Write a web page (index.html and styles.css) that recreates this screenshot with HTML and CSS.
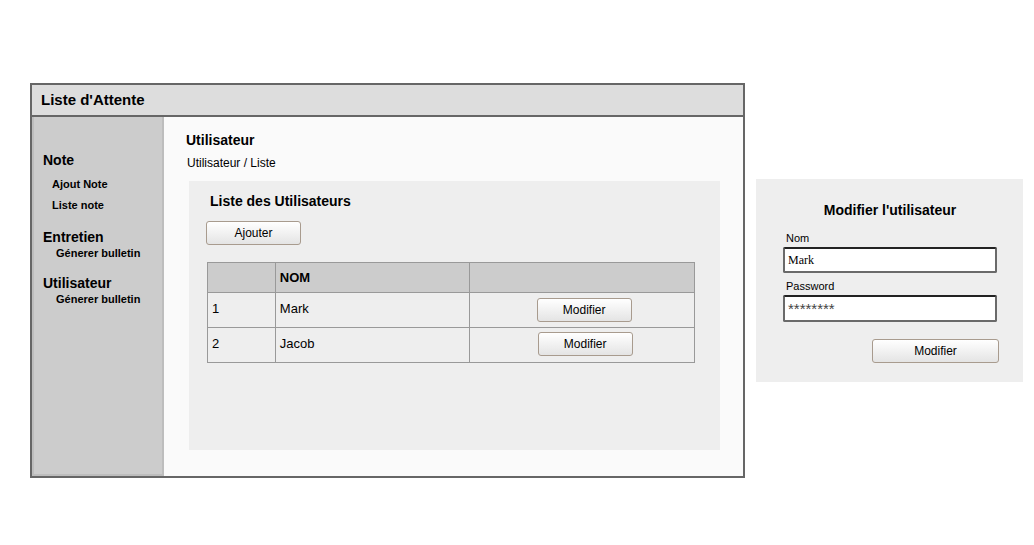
FILE: index.html
```html
<!DOCTYPE html>
<html lang="fr">
<head>
<meta charset="utf-8">
<title>Liste d'Attente</title>
<link rel="stylesheet" href="styles.css">
</head>
<body>
<div class="page">
  <div class="window">
    <div class="titlebar">Liste d'Attente</div>
    <div class="win-body">
      <nav class="sidebar">
        <div class="nav-group">Note</div>
        <div class="nav-item">Ajout Note</div>
        <div class="nav-item nav-item-2">Liste note</div>
        <div class="nav-group nav-group-gap">Entretien</div>
        <div class="nav-sub">Génerer bulletin</div>
        <div class="nav-group nav-group-gap2">Utilisateur</div>
        <div class="nav-sub">Génerer bulletin</div>
      </nav>
      <main class="main">
        <div class="page-title">Utilisateur</div>
        <div class="breadcrumb">Utilisateur / Liste</div>
        <section class="panel">
          <div class="panel-title">Liste des Utilisateurs</div>
          <button class="btn btn-add">Ajouter</button>
          <table class="users">
            <thead>
              <tr><th class="c1"></th><th class="c2">NOM</th><th class="c3"></th></tr>
            </thead>
            <tbody>
              <tr><td>1</td><td>Mark</td><td class="act"><button class="btn btn-row">Modifier</button></td></tr>
              <tr><td>2</td><td>Jacob</td><td class="act act-2"><button class="btn btn-row">Modifier</button></td></tr>
            </tbody>
          </table>
        </section>
      </main>
    </div>
  </div>
  <section class="edit">
    <div class="edit-title">Modifier l'utilisateur</div>
    <label class="lbl">Nom</label>
    <div class="field field-name">Mark</div>
    <label class="lbl lbl-pw">Password</label>
    <div class="field field-pw">********</div>
    <button class="btn btn-save">Modifier</button>
  </section>
</div>
</body>
</html>
```

FILE: styles.css
```css
* { box-sizing: border-box; }
html, body { margin: 0; padding: 0; }
body {
  width: 1034px;
  height: 545px;
  background: #fff;
  font-family: "Liberation Sans", Arial, sans-serif;
  color: #000;
  overflow: hidden;
}
.page {
  display: flex;
  align-items: flex-start;
  padding: 83px 0 0 30px;
}
.window {
  width: 715px;
  height: 395px;
  border: 2px solid #666;
  display: flex;
  flex-direction: column;
  background: #fafafa;
}
.titlebar {
  height: 32px;
  line-height: 30px;
  background: #ddd;
  border-bottom: 2px solid #666;
  padding-left: 9px;
  font-size: 15px;
  font-weight: bold;
}
.win-body {
  flex: 1;
  display: flex;
}
.sidebar {
  width: 132px;
  background: #ccc;
  border: 2px solid #bdbdbd;
  border-top: none;
  padding: 35px 0 0 9px;
  font-weight: bold;
}
.nav-group {
  font-size: 14px;
  line-height: 17px;
}
.nav-group-gap { margin-top: 17px; }
.nav-group-gap2 { margin-top: 15px; }
.nav-item {
  font-size: 11px;
  line-height: 13px;
  padding-left: 9px;
  margin-top: 9px;
}
.nav-item-2 { margin-top: 8px; }
.nav-sub {
  font-size: 11px;
  line-height: 13px;
  padding-left: 13px;
  margin-top: 1px;
}
.main {
  flex: 1;
  background: #fafafa;
  padding: 15px 0 0 22px;
}
.page-title {
  font-size: 14px;
  font-weight: bold;
  line-height: 17px;
}
.breadcrumb {
  font-size: 12px;
  line-height: 16px;
  margin-top: 6px;
  padding-left: 1px;
}
.panel {
  margin: 10px 0 0 3px;
  width: 531px;
  height: 269px;
  background: #eee;
  padding: 12px 0 0 17px;
  display: flex;
  flex-direction: column;
  align-items: flex-start;
}
.panel-title {
  font-size: 14px;
  font-weight: bold;
  line-height: 17px;
  padding-left: 4px;
}
.btn {
  font-family: "Liberation Sans", Arial, sans-serif;
  font-size: 12px;
  color: #000;
  height: 24px;
  border: 1px solid #a89b8e;
  border-radius: 3px;
  background: linear-gradient(#ffffff, #e4e4e4);
  padding: 0;
  line-height: 22px;
  cursor: pointer;
}
.btn-add {
  width: 95px;
  margin-top: 11px;
}
.users {
  margin: 17px 0 0 1px;
  width: 488px;
  border-collapse: collapse;
  font-size: 13px;
}
.users th, .users td {
  border: 1px solid #999;
  text-align: left;
  vertical-align: top;
  padding: 0 0 0 4px;
  line-height: 15px;
}
.users th {
  background: #ccc;
  height: 30px;
  padding-top: 7px;
  font-weight: bold;
}
.users td {
  height: 35px;
  padding-top: 8px;
}
.users .c1 { width: 68px; }
.users .c2 { width: 195px; }
.users .c3 { width: 225px; }
.users td.act {
  padding: 5px 0 0 0;
  text-align: center;
}
.users td.act .btn { margin-left: 4px; }
.users td.act-2 { padding-top: 4px; }
.users td.act-2 .btn { margin-left: 6px; }
.btn-row { width: 95px; }
.edit {
  margin: 96px 0 0 11px;
  width: 267px;
  height: 203px;
  background: #eee;
  padding: 23px 26px 0 27px;
  display: flex;
  flex-direction: column;
}
.edit-title {
  text-align: center;
  font-size: 14px;
  font-weight: bold;
  line-height: 17px;
}
.lbl {
  font-size: 11px;
  line-height: 13px;
  margin-top: 13px;
  padding-left: 3px;
}
.lbl-pw { margin-top: 7px; }
.field {
  margin-top: 2px;
  width: 214px;
  background: #fff;
  border: 2px solid #6a6a6a;
  border-top-color: #222;
  border-radius: 2px;
  padding-left: 3px;
}
.field-name {
  height: 26px;
  font-family: "Liberation Serif", "Times New Roman", serif;
  font-size: 12px;
  line-height: 22px;
}
.field-pw {
  height: 27px;
  font-size: 15px;
  line-height: 18px;
  padding-top: 3px;
  color: #444;
}
.btn-save {
  margin-top: 17px;
  width: 127px;
  align-self: flex-end;
  margin-right: -2px;
}
```
